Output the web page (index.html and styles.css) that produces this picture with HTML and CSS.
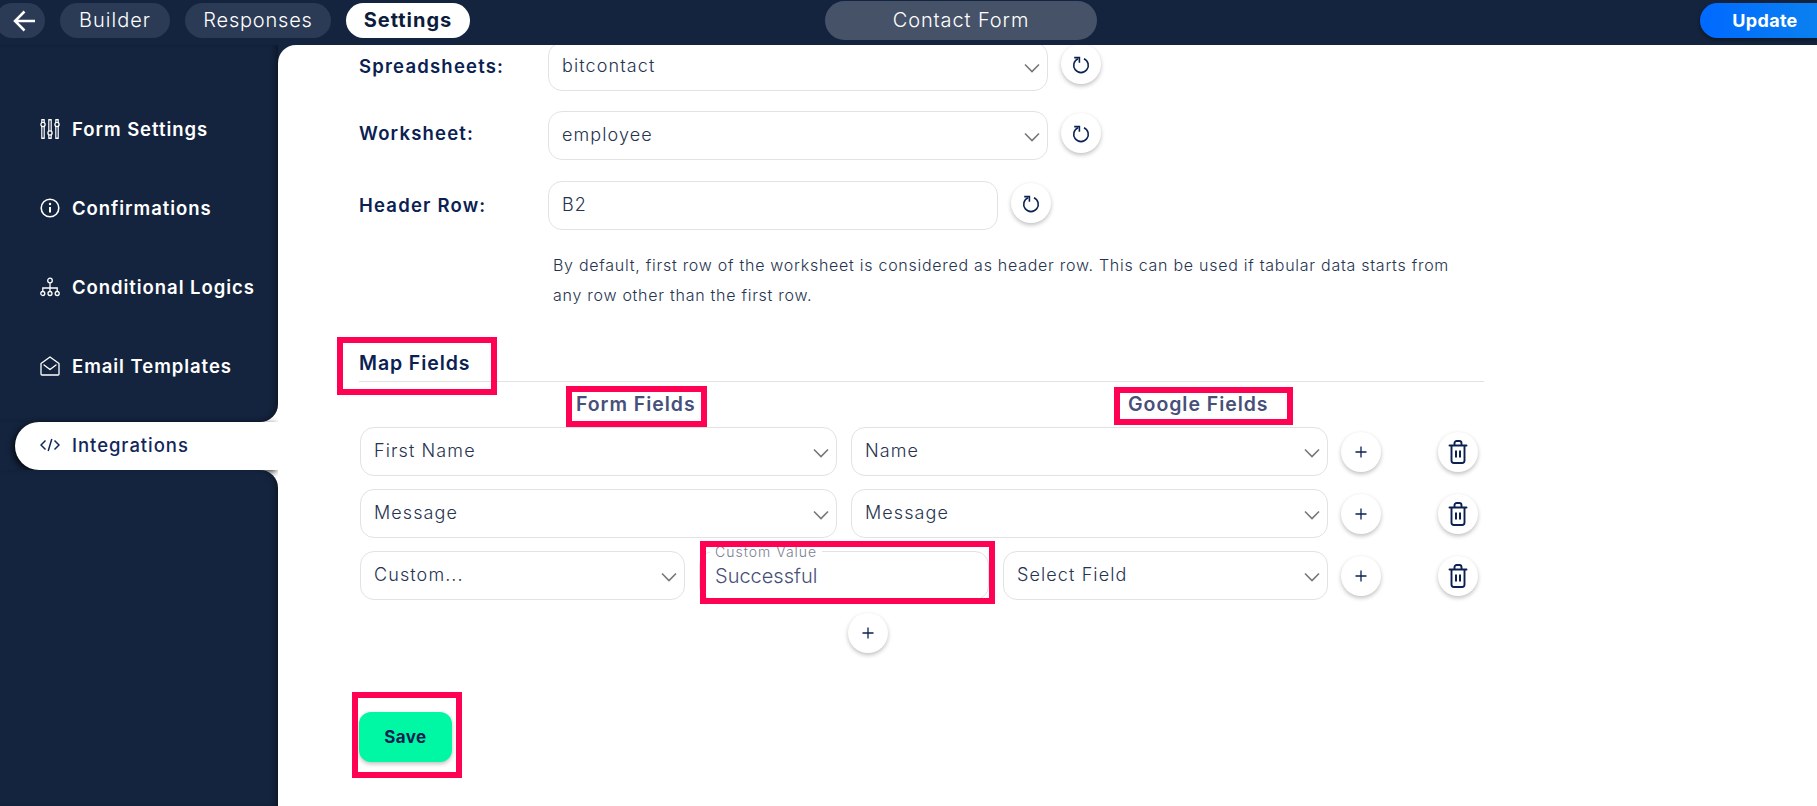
FILE: index.html
```html
<!DOCTYPE html>
<html lang="en">
<head>
<meta charset="utf-8">
<title>Contact Form</title>
<link rel="stylesheet" href="styles.css">
</head>
<body>
<svg class="defs" width="0" height="0" aria-hidden="true">
  <symbol id="chev" viewBox="0 0 16 10"><path d="M1 1.500l7 7 7-7" fill="none" stroke="currentColor" stroke-width="1.600"/></symbol>
  <symbol id="plus" viewBox="0 0 12 12"><path d="M6 .5v11M.5 6h11" fill="none" stroke="currentColor" stroke-width="1.300"/></symbol>
  <symbol id="trash" viewBox="0 0 20 24"><g fill="none" stroke="currentColor" stroke-width="1.900" stroke-linecap="round" stroke-linejoin="round"><path d="M1.500 5.500h17"/><path d="M6.500 5V3.200C6.500 2 7.500 1 8.700 1h2.600c1.200 0 2.200 1 2.200 2.200V5"/><path d="M3.500 6v14.500c0 1.400 1 2.500 2.400 2.500h8.200c1.400 0 2.400-1.100 2.400-2.500V6"/></g><path d="M8 10.500v7M12 10.500v7" stroke="currentColor" stroke-width="2" fill="none"/></symbol>
  <symbol id="refresh" viewBox="0 0 20 20"><g fill="none" stroke="currentColor" stroke-width="1.600"><path d="M13 4.700A7.300 7.300 0 1 1 7 4.700"/><path d="M3.200 3.600H8.400V8.800"/></g></symbol>
</svg>

<header class="topbar">
  <nav class="tabs">
    <a class="tab tab-back"><svg class="back-icon" viewBox="0 0 22 22"><path d="M22 11H2M11.500 1.500L2 11l9.500 9.500" fill="none" stroke="currentColor" stroke-width="2.500"/></svg></a>
    <a class="tab tab-builder">Builder</a>
    <a class="tab tab-responses">Responses</a>
    <a class="tab tab-active">Settings</a>
  </nav>
  <div class="title-pill">Contact Form</div>
  <button class="update">Update</button>
</header>

<div class="body">
  <aside class="sidebar">
    <div class="side-top">
      <a class="side-item">
        <svg class="side-icon" viewBox="0 0 20 20"><g fill="none" stroke="currentColor" stroke-width="1.300"><path d="M3 1v18M10 1v18M17 1v18" stroke-width="3.600" stroke-linecap="round"/><path d="M3 1.500v17M10 1.500v17M17 1.500v17" stroke="#14243e" stroke-width="1.200"/><circle cx="3" cy="5.500" r="2.100" fill="#14243e"/><circle cx="10" cy="14" r="2.100" fill="#14243e"/><circle cx="17" cy="5.500" r="2.100" fill="#14243e"/></g></svg>
        <span>Form Settings</span>
      </a>
      <a class="side-item">
        <svg class="side-icon" viewBox="0 0 20 20"><circle cx="10" cy="10" r="8.800" fill="none" stroke="currentColor" stroke-width="1.600"/><path d="M10 9v5.500" stroke="currentColor" stroke-width="2" fill="none"/><circle cx="10" cy="6" r="1.200" fill="currentColor"/></svg>
        <span>Confirmations</span>
      </a>
      <a class="side-item">
        <svg class="side-icon" viewBox="0 0 20 20"><g fill="none" stroke="currentColor" stroke-width="1.300"><circle cx="10" cy="3.500" r="2.300"/><circle cx="2.800" cy="16.500" r="2"/><circle cx="10" cy="16.500" r="2"/><circle cx="17.200" cy="16.500" r="2"/><path d="M10 6v8.500M2.800 14.500V11h14.400v3.500"/></g></svg>
        <span>Conditional Logics</span>
      </a>
      <a class="side-item">
        <svg class="side-icon" viewBox="0 0 20 20"><g fill="none" stroke="currentColor" stroke-width="1.300" stroke-linejoin="round"><path d="M1 7.500L10 .9l9 6.600V18a1 1 0 0 1-1 1H2a1 1 0 0 1-1-1z"/><path d="M4 9l6 4.500L16 9" stroke-linecap="round"/></g></svg>
        <span>Email Templates</span>
      </a>
    </div>
    <div class="side-active-row">
      <a class="side-item side-item-active">
        <svg class="side-icon" viewBox="0 0 20 20"><path d="M5.500 5.500L1 10l4.500 4.500M14.500 5.500L19 10l-4.500 4.500M11.800 4L8.200 16" fill="none" stroke="currentColor" stroke-width="1.500"/></svg>
        <span>Integrations</span>
      </a>
    </div>
    <div class="side-bottom"></div>
  </aside>

  <main class="main">
    <div class="form-row form-row-first">
      <label class="row-label">Spreadsheets:</label>
      <div class="select select-wide"><span>bitcontact</span><svg class="chev"><use href="#chev"/></svg></div>
      <button class="round round-refresh"><svg class="ic-refresh"><use href="#refresh"/></svg></button>
    </div>
    <div class="form-row form-row-second">
      <label class="row-label row-label-up">Worksheet:</label>
      <div class="select select-wide"><span>employee</span><svg class="chev"><use href="#chev"/></svg></div>
      <button class="round round-refresh"><svg class="ic-refresh"><use href="#refresh"/></svg></button>
    </div>
    <div class="form-row">
      <label class="row-label">Header Row:</label>
      <div class="select select-narrow"><span>B2</span></div>
      <button class="round round-refresh"><svg class="ic-refresh"><use href="#refresh"/></svg></button>
    </div>
    <p class="help">By default, first row of the worksheet is considered as header row. This can be used if tabular data starts from any row other than the first row.</p>

    <h2 class="map-title">Map Fields</h2>
    <div class="col-heads">
      <span class="col-form">Form Fields</span>
      <span class="col-google">Google Fields</span>
    </div>

    <div class="map-rows">
      <div class="map-row">
        <div class="map-fields map-two">
          <div class="select"><span>First Name</span><svg class="chev"><use href="#chev"/></svg></div>
          <div class="select"><span>Name</span><svg class="chev"><use href="#chev"/></svg></div>
        </div>
        <button class="round"><svg class="ic-plus"><use href="#plus"/></svg></button>
        <button class="round round-del"><svg class="ic-trash"><use href="#trash"/></svg></button>
      </div>
      <div class="map-row">
        <div class="map-fields map-two">
          <div class="select"><span>Message</span><svg class="chev"><use href="#chev"/></svg></div>
          <div class="select"><span>Message</span><svg class="chev"><use href="#chev"/></svg></div>
        </div>
        <button class="round"><svg class="ic-plus"><use href="#plus"/></svg></button>
        <button class="round round-del"><svg class="ic-trash"><use href="#trash"/></svg></button>
      </div>
      <div class="map-row">
        <div class="map-fields map-three">
          <div class="select"><span>Custom...</span><svg class="chev"><use href="#chev"/></svg></div>
          <div class="custom">
            <span class="custom-label">Custom Value</span>
            <span class="custom-value">Successful</span>
          </div>
          <div class="select"><span>Select Field</span><svg class="chev"><use href="#chev"/></svg></div>
        </div>
        <button class="round"><svg class="ic-plus"><use href="#plus"/></svg></button>
        <button class="round round-del"><svg class="ic-trash"><use href="#trash"/></svg></button>
      </div>
    </div>

    <button class="round round-add"><svg class="ic-plus"><use href="#plus"/></svg></button>
    <button class="save">Save</button>

    <div class="mark mark-map"></div>
    <div class="mark mark-form"></div>
    <div class="mark mark-google"></div>
    <div class="mark mark-custom"></div>
    <div class="mark mark-save"></div>
  </main>
</div>
</body>
</html>
```

FILE: styles.css
```css
* { box-sizing: border-box; }
html, body { height: 100%; }
body {
  margin: 0;
  height: 806px;
  overflow: hidden;
  background: #14243e;
  font-family: Inter, "Open Sans", "Liberation Sans", sans-serif;
  color: #14243e;
  display: flex;
  flex-direction: column;
}
.defs { position: absolute; }
button { font-family: inherit; border: 0; padding: 0; cursor: pointer; }

/* top bar */
.topbar {
  flex: 0 0 45px;
  display: flex;
  align-items: flex-start;
  background: #14243e;
}
.tabs {
  flex: 0 0 825px;
  display: flex;
  gap: 15px;
  padding-top: 3px;
}
.tab {
  height: 35px;
  border-radius: 18px;
  background: #2b3a55;
  color: #fff;
  font-size: 20px;
  font-weight: 300;
  line-height: 35px;
  text-align: center;
  letter-spacing: 1px;
}
.tab-back {
  width: 50px;
  margin-left: -5px;
  display: flex;
  align-items: center;
  justify-content: center;
  padding-left: 8px;
}
.back-icon { width: 22px; height: 22px; }
.tab-builder { width: 110px; }
.tab-responses { width: 146px; letter-spacing: .8px; }
.tab-active {
  width: 124px;
  background: #fff;
  color: #0c1c3c;
  font-weight: 700;
  letter-spacing: 1px;
}
.title-pill {
  flex: 0 0 272px;
  height: 39px;
  margin-top: 1px;
  border-radius: 20px;
  background: #465268;
  color: #fff;
  font-size: 20px;
  font-weight: 300;
  line-height: 39px;
  text-align: center;
  letter-spacing: .9px;
}
.update {
  margin-left: auto;
  margin-top: 3px;
  width: 117px;
  height: 35px;
  padding-left: 13px;
  border-radius: 18px 0 0 18px;
  background: linear-gradient(90deg, #0069ff, #0a80f0);
  box-shadow: 0 2px 4px rgba(0, 0, 0, .4);
  color: #fff;
  font-size: 18px;
  font-weight: 700;
  letter-spacing: .3px;
}

/* layout */
.body { flex: 1; display: flex; min-height: 0; }

/* sidebar */
.sidebar {
  flex: 0 0 278px;
  display: flex;
  flex-direction: column;
  background: #fff;
}
.side-top {
  height: 377px;
  padding: 44px 0 17px;
  background: #14243e;
  border-bottom-right-radius: 18px;
  box-shadow: inset -5px 0 6px -3px rgba(0, 0, 0, .45);
}
.side-item {
  height: 79px;
  padding-left: 40px;
  display: flex;
  align-items: center;
  gap: 12px;
  color: #fff;
  font-size: 18.500px;
  font-weight: 600;
  letter-spacing: .95px;
}
.side-icon { width: 20px; height: 20px; flex: none; }
.side-active-row { background: #14243e; }
.side-item-active {
  height: 48px;
  margin-left: 15px;
  padding-left: 25px;
  padding-bottom: 2px;
  background: #fff;
  color: #14265a;
  font-weight: 500;
  border-radius: 24px 0 0 24px;
  box-shadow: -2px 2px 6px rgba(0, 0, 0, .8);
}
.side-bottom {
  flex: 1;
  background: #14243e;
  border-top-right-radius: 18px;
  box-shadow: inset -5px 0 6px -3px rgba(0, 0, 0, .45);
}

/* main */
.main {
  position: relative;
  flex: 1;
  padding-left: 81px;
  overflow: hidden;
  background: #fff;
  border-top-left-radius: 18px;
}
.form-row {
  display: flex;
  align-items: flex-start;
  margin-bottom: 20px;
}
.form-row-first { margin-top: -3px; }
.form-row-second { margin-bottom: 21px; }
.row-label {
  flex: 0 0 189px;
  height: 49px;
  line-height: 48px;
  color: #0a2152;
  font-size: 18.500px;
  font-weight: 600;
  letter-spacing: 1.200px;
}
.row-label-up { line-height: 44px; }
.select {
  height: 49px;
  min-width: 0;
  display: flex;
  align-items: center;
  justify-content: space-between;
  padding: 0 7px 2px 13px;
  background: #fff;
  border: 1px solid #e2e2e2;
  border-radius: 14px;
  color: #27334f;
  font-size: 18px;
  font-weight: 300;
  letter-spacing: 1.100px;
}
.select-wide { flex: 0 0 500px; }
.select-narrow { flex: 0 0 450px; }
.chev { width: 16px; height: 10px; color: #777; flex: none; margin-top: 4px; }
.round {
  width: 40px;
  height: 40px;
  flex: none;
  display: flex;
  align-items: center;
  justify-content: center;
  border-radius: 50%;
  background: #fff;
  color: #0a2152;
  box-shadow: 0 2px 4px rgba(0, 0, 0, .25);
}
.round-refresh { margin: 2px 0 0 13px; }
.ic-refresh { width: 20px; height: 20px; }
.ic-plus { width: 12px; height: 12px; }
.ic-trash { width: 20px; height: 24px; }
.help {
  margin: 0 0 0 194px;
  width: 925px;
  color: #27334f;
  font-size: 16px;
  font-weight: 300;
  line-height: 30px;
  letter-spacing: .73px;
}
.map-title {
  margin: 35px 0 0;
  width: 1125px;
  height: 37px;
  border-bottom: 1px solid #e2e2e2;
  color: #0a2152;
  font-size: 19.500px;
  font-weight: 600;
  line-height: 37px;
  letter-spacing: .9px;
}
.col-heads {
  height: 45px;
  display: flex;
  padding-left: 217px;
  color: #47507a;
  font-size: 19.500px;
  font-weight: 600;
  line-height: 45px;
  letter-spacing: .95px;
}
.col-form { flex: 0 0 552px; }
.map-rows {
  display: flex;
  flex-direction: column;
  gap: 13px;
  margin-left: 1px;
}
.map-row { display: flex; align-items: center; }
.map-fields { flex: 0 0 968px; display: grid; gap: 14px; }
.map-two { grid-template-columns: 1fr 1fr; }
.map-three { grid-template-columns: 325px 290px 325px; }
.map-row .round { margin-left: 13px; }
.map-row .round-del { margin-left: 57px; }
.custom {
  position: relative;
  height: 49px;
  padding: 12px 15px 0;
  border: 1px solid #e2e2e2;
  border-radius: 14px;
  color: #47507a;
  font-size: 20px;
  font-weight: 300;
}
.custom-label {
  position: absolute;
  left: 10px;
  top: -8px;
  padding: 0 5px;
  background: #fff;
  color: #7b7f90;
  font-size: 14px;
  font-weight: 300;
  line-height: 16px;
  letter-spacing: 1px;
}
.round-add { margin: 13px 0 0 489px; }
.save {
  display: block;
  margin-top: 59px;
  width: 93px;
  height: 50px;
  border-radius: 12px;
  background: #00f8a5;
  box-shadow: 0 2px 4px rgba(0, 0, 0, .25);
  color: #0a1f52;
  font-size: 17px;
  font-weight: 700;
  letter-spacing: .4px;
}

/* annotation rectangles drawn over the page */
.mark {
  position: absolute;
  border: 6px solid #ff0253;
  pointer-events: none;
}
.mark-map { left: 59px; top: 292px; width: 160px; height: 58px; }
.mark-form { left: 288px; top: 341px; width: 141px; height: 41px; }
.mark-google { left: 836px; top: 342px; width: 179px; height: 38px; }
.mark-custom { left: 422px; top: 496px; width: 295px; height: 63px; }
.mark-save { left: 74px; top: 647px; width: 110px; height: 86px; }
```
